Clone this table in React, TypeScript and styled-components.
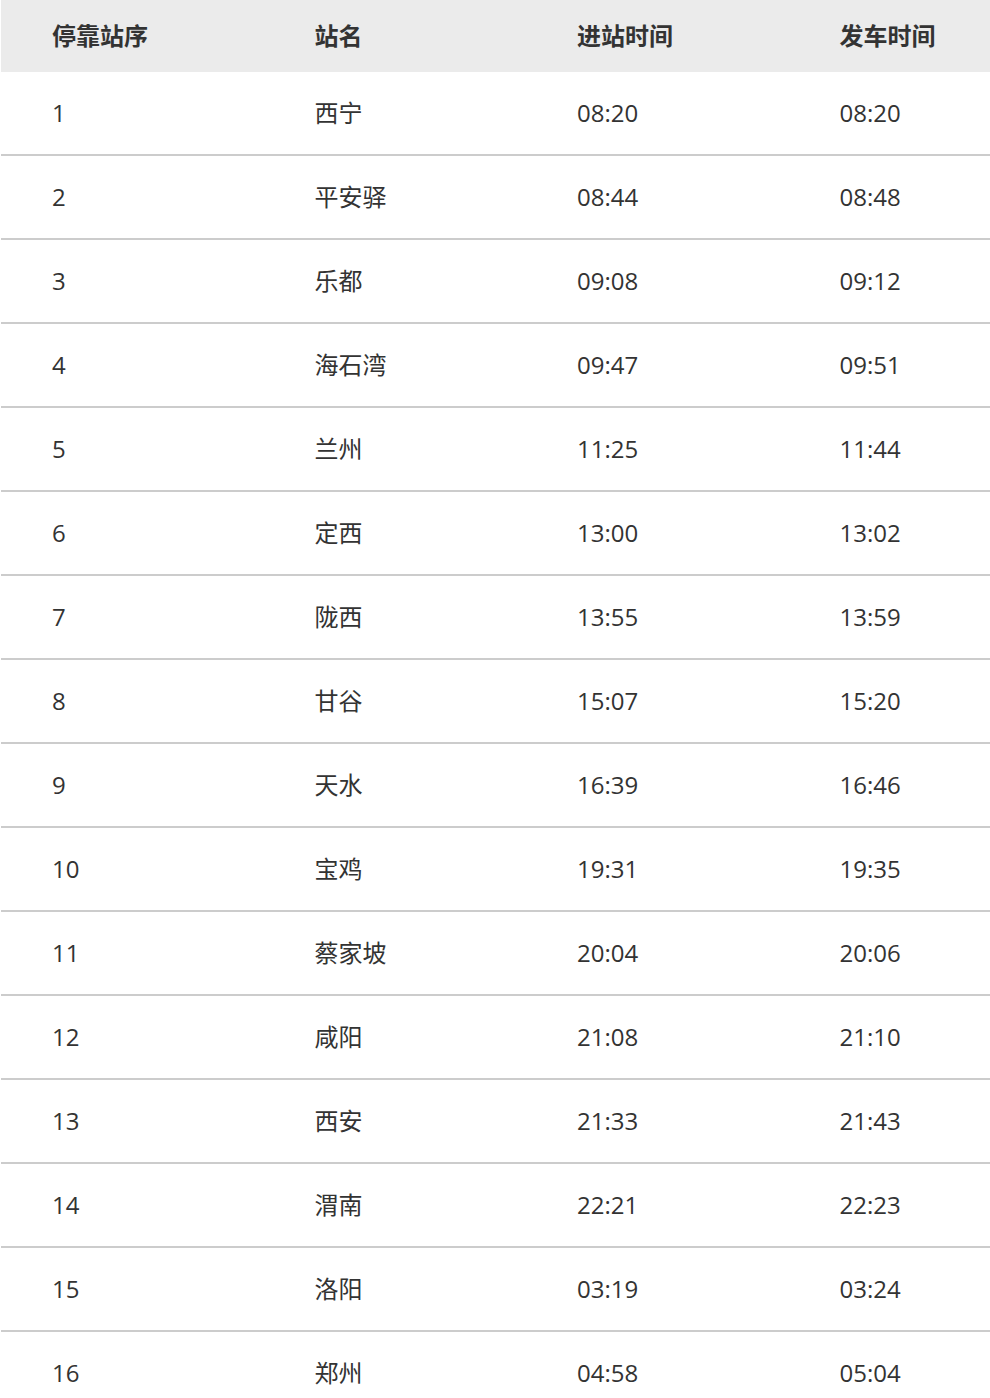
import React, { FC } from "react";
import styled, { createGlobalStyle } from "styled-components";

const rows: [string, string, string][] = [
  ["西宁", "08:20", "08:20"],
  ["平安驿", "08:44", "08:48"],
  ["乐都", "09:08", "09:12"],
  ["海石湾", "09:47", "09:51"],
  ["兰州", "11:25", "11:44"],
  ["定西", "13:00", "13:02"],
  ["陇西", "13:55", "13:59"],
  ["甘谷", "15:07", "15:20"],
  ["天水", "16:39", "16:46"],
  ["宝鸡", "19:31", "19:35"],
  ["蔡家坡", "20:04", "20:06"],
  ["咸阳", "21:08", "21:10"],
  ["西安", "21:33", "21:43"],
  ["渭南", "22:21", "22:23"],
  ["洛阳", "03:19", "03:24"],
  ["郑州", "04:58", "05:04"],
];

const App: FC = () => {
  return (
    <>
      <GlobalStyle />
      <Wrapper>
        <Table>
          <HeadRow>
            <Cell>停靠站序</Cell>
            <Cell>站名</Cell>
            <Cell>进站时间</Cell>
            <Cell>发车时间</Cell>
          </HeadRow>
          {rows.map((r, i) => (
            <Row key={i}>
              <Cell>{i + 1}</Cell>
              <Cell>{r[0]}</Cell>
              <Cell>{r[1]}</Cell>
              <Cell>{r[2]}</Cell>
            </Row>
          ))}
        </Table>
      </Wrapper>
    </>
  );
};

const GlobalStyle = createGlobalStyle`
  body {
    margin: 0;
    background: #fff;
    font-family: "Open Sans", "Noto Sans CJK SC", sans-serif;
  }
`;

const Wrapper = styled.div`
  width: 990px;
  height: 1398px;
  overflow: hidden;
  padding-left: 1px;
  box-sizing: border-box;
`;

const Table = styled.div`
  width: 1050px;
  display: flex;
  flex-direction: column;
`;

const HeadRow = styled.div`
  display: grid;
  grid-template-columns: repeat(4, 262.5px);
  height: 72px;
  align-items: center;
  background: #ebebeb;
  font-weight: 700;
  color: #333;
`;

const Row = styled.div`
  display: grid;
  grid-template-columns: repeat(4, 262.5px);
  height: 82px;
  align-items: center;
  border-bottom: 2px solid #cccccc;
  color: #333;
`;

const Cell = styled.div`
  padding-left: 51px;
  font-size: 24px;
  line-height: 32px;
  white-space: nowrap;
`;

export default App;
